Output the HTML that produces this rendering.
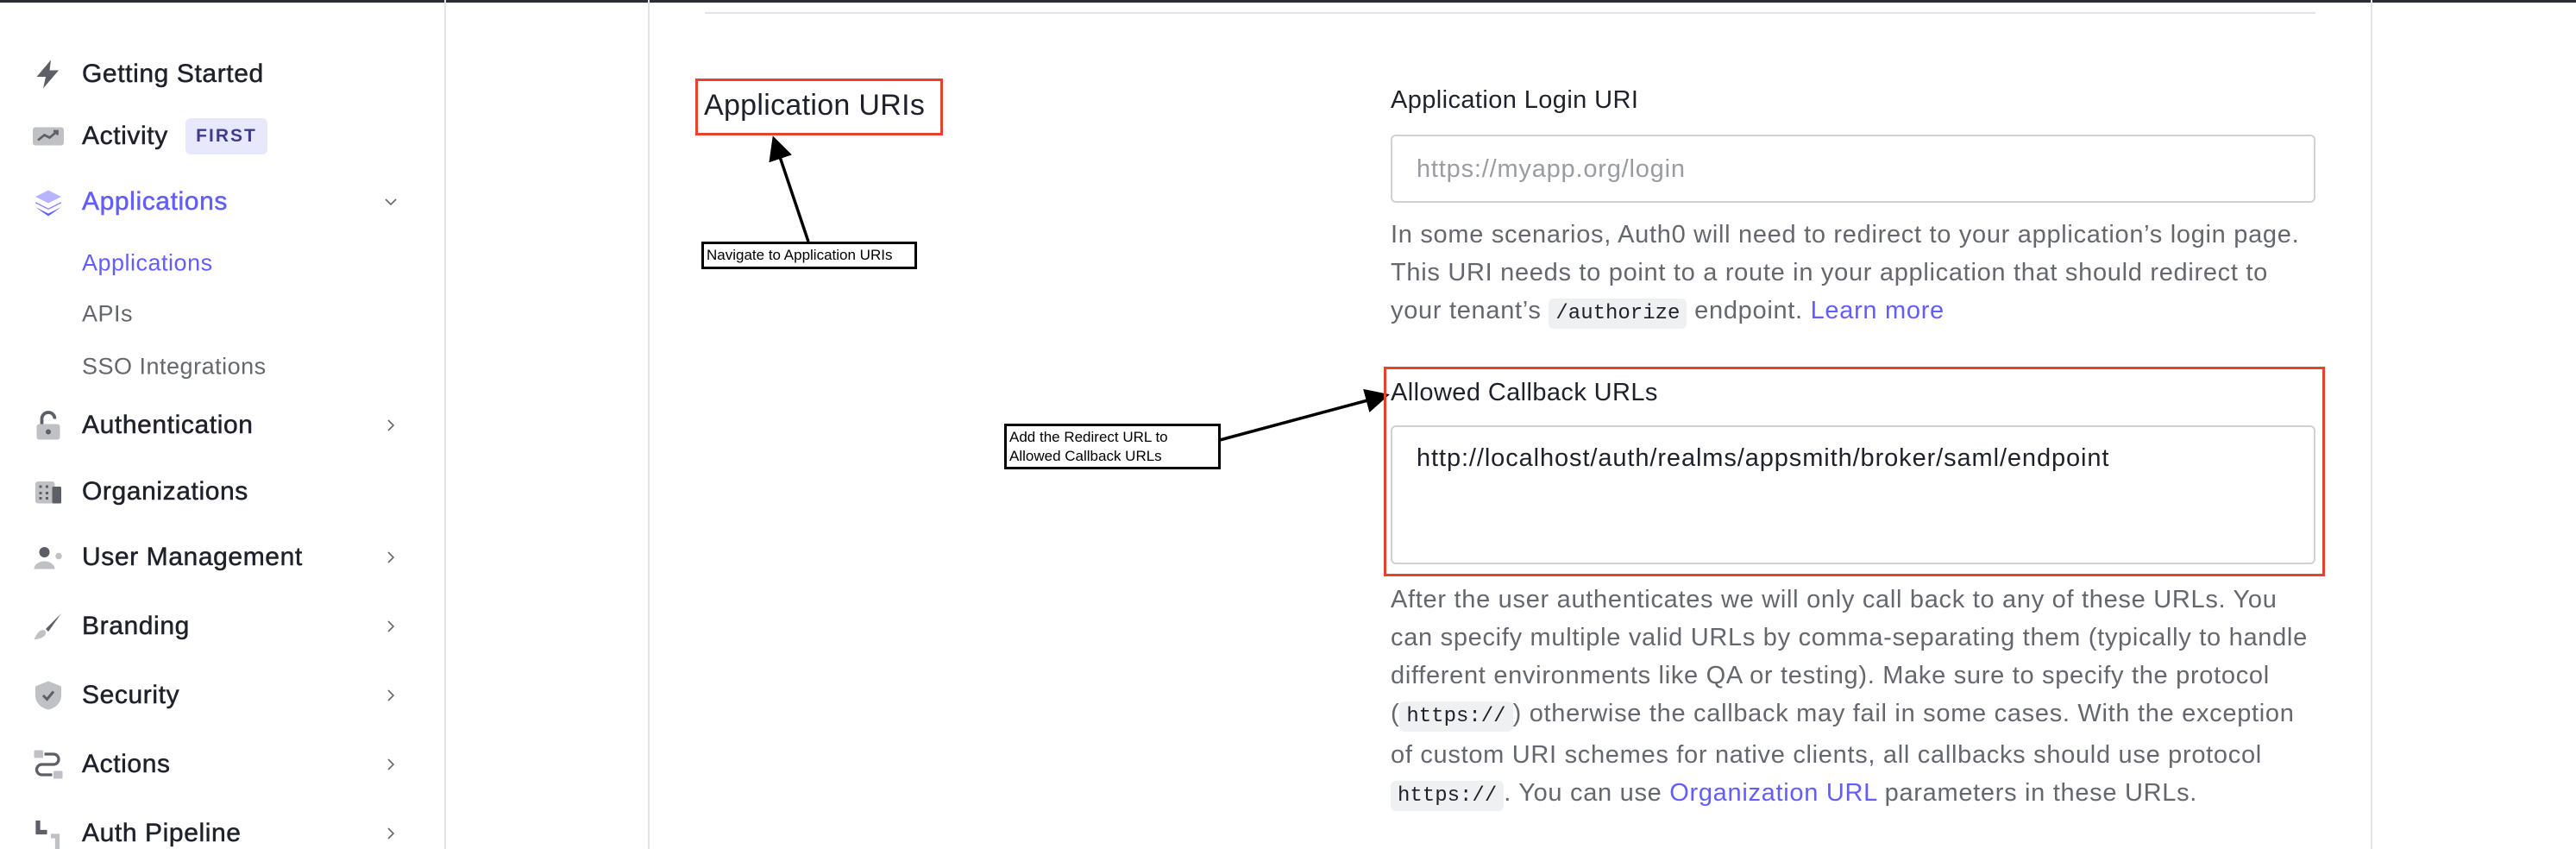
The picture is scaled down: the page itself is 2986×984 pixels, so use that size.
<!DOCTYPE html>
<html><head><meta charset="utf-8"><style>
*{margin:0;padding:0;box-sizing:border-box}
body{width:2986px;height:984px;position:relative;background:#fff;font-family:"Liberation Sans",sans-serif;overflow:hidden;color:#1e212a}
.a{position:absolute;white-space:nowrap}
.nav{position:absolute;left:95px;font-size:30px;letter-spacing:0.6px;color:#1e212a;transform:translateY(-50%);-webkit-text-stroke:0.5px #1e212a}
.sub{position:absolute;left:95px;font-size:27px;letter-spacing:0.5px;color:#65676e;transform:translateY(-50%)}
.ic{position:absolute;left:38px;width:36px;height:36px;transform:translateY(-50%)}
.chev{position:absolute;left:444px;width:18px;height:18px;transform:translateY(-50%)}
.help{position:absolute;left:1612px;font-size:29px;letter-spacing:0.7px;color:#65676e;line-height:44px;white-space:nowrap}
code{font-family:"Liberation Mono",monospace;font-size:24px;letter-spacing:0;background:#eff0f2;color:#1e212a;padding:4px 8px;border-radius:6px}
.lnk{color:#635dff}
</style></head><body>
<div class="a" style="left:0;top:0;width:2986px;height:3px;background:#2a2e35"></div>
<div class="a" style="left:515px;top:0;width:2px;height:984px;background:#e3e4e8"></div>
<div class="a" style="left:751px;top:0;width:2px;height:984px;background:#e3e4e8"></div>
<div class="a" style="left:2748px;top:0;width:2px;height:984px;background:#e3e4e8"></div>
<div class="a" style="left:817px;top:14px;width:1867px;height:2px;background:#e3e4e8"></div>

<svg class="ic" style="top:86px" viewBox="0 0 24 24"><path d="M14 1 L3 14 H10 L8 23 L20 9 H13 Z" fill="#5c5f66"/></svg>
<svg class="ic" style="top:158px" viewBox="0 0 24 24"><rect x="0" y="5" width="24" height="14" rx="2" fill="#c0c1c5"/><path d="M4 15 L9 11 L13 13 L19 8 M16 8 H19 V11" stroke="#5c5f66" stroke-width="1.8" fill="none"/></svg>
<svg class="ic" style="top:234px" viewBox="0 0 24 24"><path d="M12 3 L22 8 L12 13 L2 8 Z" fill="#b8b4ff"/><path d="M2 12 L12 17 L22 12 L22 13 L12 18 L2 13Z" fill="#8a84ff"/><path d="M2 16 L12 21 L22 16 L12 23 Z" fill="#635dff"/></svg>
<svg class="ic" style="top:493px" viewBox="0 0 24 24"><path d="M7 11 V7 a5 5 0 0 1 10 0" stroke="#5c5f66" stroke-width="2.5" fill="none"/><rect x="3" y="11" width="18" height="12" rx="2" fill="#c0c1c5"/><circle cx="12" cy="17" r="2" fill="#5c5f66"/></svg>
<svg class="ic" style="top:570px" viewBox="0 0 24 24"><rect x="2" y="4" width="15" height="17" rx="2" fill="#c0c1c5"/><rect x="15" y="8" width="7" height="13" rx="1" fill="#5c5f66"/><g fill="#5c5f66"><rect x="5" y="7" width="2" height="2"/><rect x="10" y="7" width="2" height="2"/><rect x="5" y="12" width="2" height="2"/><rect x="10" y="12" width="2" height="2"/><rect x="5" y="16" width="2" height="2"/><rect x="10" y="16" width="2" height="2"/></g></svg>
<svg class="ic" style="top:646px" viewBox="0 0 24 24"><circle cx="9" cy="8" r="4" fill="#5c5f66"/><path d="M1 21 a8 6 0 0 1 16 0 Z" fill="#c0c1c5"/><circle cx="20" cy="11" r="2.5" fill="#c0c1c5"/></svg>
<svg class="ic" style="top:726px" viewBox="0 0 24 24"><path d="M22 2 L10 14 L12 16 Z" fill="#5c5f66"/><path d="M9 15 C5 14 3 18 1 22 C5 22 11 20 10 16 Z" fill="#c0c1c5"/></svg>
<svg class="ic" style="top:806px" viewBox="0 0 24 24"><path d="M12 1 L22 5 V12 C22 18 17 22 12 23 C7 22 2 18 2 12 V5 Z" fill="#c0c1c5"/><path d="M8 12 L11 15 L16 9" stroke="#5c5f66" stroke-width="2" fill="none"/></svg>
<svg class="ic" style="top:886px" viewBox="0 0 24 24"><rect x="1" y="1" width="7" height="6" rx="1" fill="#c0c1c5"/><rect x="16" y="17" width="7" height="6" rx="1" fill="#c0c1c5"/><path d="M9 4 H16 a4 4 0 0 1 0 8 H7 a4 4 0 0 0 0 8 H15" stroke="#5c5f66" stroke-width="2.2" fill="none"/></svg>
<svg class="ic" style="top:966px" viewBox="0 0 24 24"><path d="M4 2 V11 H11" stroke="#5c5f66" stroke-width="3.5" fill="none"/><path d="M14 14 H19 V24" stroke="#c0c1c5" stroke-width="3.5" fill="none"/></svg>

<div class="nav" style="top:86px">Getting Started</div>
<div class="nav" style="top:158px">Activity</div>
<div class="a" style="left:215px;top:137px;width:95px;height:42px;background:#e8e8fc;border-radius:6px;color:#3e3b8f;font-size:21px;font-weight:bold;letter-spacing:2px;line-height:42px;text-align:center">FIRST</div>
<div class="nav" style="top:234px;color:#635dff;-webkit-text-stroke:0.5px #635dff">Applications</div>
<svg class="chev" style="top:234px" viewBox="0 0 18 18"><path d="M3 6 L9 12 L15 6" stroke="#65676e" stroke-width="1.6" fill="none"/></svg>
<div class="sub" style="top:305px;color:#635dff">Applications</div>
<div class="sub" style="top:364px">APIs</div>
<div class="sub" style="top:425px">SSO Integrations</div>
<div class="nav" style="top:493px">Authentication</div>
<div class="nav" style="top:570px">Organizations</div>
<div class="nav" style="top:646px">User Management</div>
<div class="nav" style="top:726px">Branding</div>
<div class="nav" style="top:806px">Security</div>
<div class="nav" style="top:886px">Actions</div>
<div class="nav" style="top:966px">Auth Pipeline</div>
<svg class="chev" style="top:493px" viewBox="0 0 18 18"><path d="M6 3 L12 9 L6 15" stroke="#65676e" stroke-width="1.6" fill="none"/></svg>
<svg class="chev" style="top:646px" viewBox="0 0 18 18"><path d="M6 3 L12 9 L6 15" stroke="#65676e" stroke-width="1.6" fill="none"/></svg>
<svg class="chev" style="top:726px" viewBox="0 0 18 18"><path d="M6 3 L12 9 L6 15" stroke="#65676e" stroke-width="1.6" fill="none"/></svg>
<svg class="chev" style="top:806px" viewBox="0 0 18 18"><path d="M6 3 L12 9 L6 15" stroke="#65676e" stroke-width="1.6" fill="none"/></svg>
<svg class="chev" style="top:886px" viewBox="0 0 18 18"><path d="M6 3 L12 9 L6 15" stroke="#65676e" stroke-width="1.6" fill="none"/></svg>
<svg class="chev" style="top:966px" viewBox="0 0 18 18"><path d="M6 3 L12 9 L6 15" stroke="#65676e" stroke-width="1.6" fill="none"/></svg>

<div class="a" style="left:806px;top:91px;width:287px;height:66px;border:3px solid #e8412c"></div>
<div class="a" style="left:816px;top:102px;font-size:34px;letter-spacing:0.3px;line-height:40px;color:#1e212a">Application URIs</div>
<div class="a" style="left:813px;top:280px;width:250px;height:32px;border:3px solid #000;font-size:17px;line-height:26px;padding-left:3px;color:#000">Navigate to Application URIs</div>
<svg class="a" style="left:0;top:0" width="2986" height="984"><defs><marker id="m" markerWidth="8" markerHeight="8" refX="6" refY="4" orient="auto"><path d="M0 0 L8 4 L0 8Z" fill="#000"/></marker></defs>
<line x1="937" y1="280" x2="898" y2="164" stroke="#000" stroke-width="3.5" marker-end="url(#m)"/>
<line x1="1414" y1="510" x2="1604" y2="459" stroke="#000" stroke-width="3.5" marker-end="url(#m)"/></svg>
<div class="a" style="left:1164px;top:491px;width:251px;height:53px;border:3px solid #000;font-size:17px;line-height:22px;padding:2px 3px;color:#000">Add the Redirect URL to<br>Allowed Callback URLs</div>

<div class="a" style="left:1612px;top:98px;font-size:29px;letter-spacing:0.4px;line-height:36px">Application Login URI</div>
<div class="a" style="left:1612px;top:156px;width:1072px;height:79px;border:2px solid #d0d1d5;border-radius:6px"></div>
<div class="a" style="left:1642px;top:178px;font-size:29px;letter-spacing:0.8px;line-height:36px;color:#9a9ca3">https://myapp.org/login</div>
<div class="help" style="top:250px">In some scenarios, Auth0 will need to redirect to your application’s login page.<br>This URI needs to point to a route in your application that should redirect to<br>your tenant’s <code>/authorize</code> endpoint. <span class="lnk">Learn more</span></div>

<div class="a" style="left:1604px;top:425px;width:1091px;height:243px;border:3px solid #e8412c"></div>
<div class="a" style="left:1612px;top:437px;font-size:29px;letter-spacing:0.4px;line-height:36px">Allowed Callback URLs</div>
<div class="a" style="left:1612px;top:493px;width:1072px;height:161px;border:2px solid #d0d1d5;border-radius:6px"></div>
<div class="a" style="left:1642px;top:513px;font-size:29px;letter-spacing:0.9px;line-height:36px;color:#1e212a">http://localhost/auth/realms/appsmith/broker/saml/endpoint</div>
<div class="help" style="top:673px">After the user authenticates we will only call back to any of these URLs. You<br>can specify multiple valid URLs by comma-separating them (typically to handle<br>different environments like QA or testing). Make sure to specify the protocol<br>(<code>https://</code>) otherwise the callback may fail in some cases. With the exception<br>of custom URI schemes for native clients, all callbacks should use protocol<br><code>https://</code>. You can use <span class="lnk">Organization URL</span> parameters in these URLs.</div>
</body></html>
